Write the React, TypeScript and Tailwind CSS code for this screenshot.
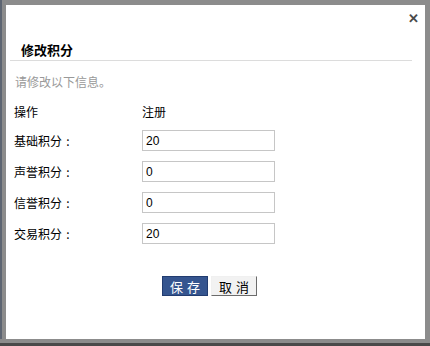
const rows = [
  { label: '基础积分', value: '20' },
  { label: '声誉积分', value: '0' },
  { label: '信誉积分', value: '0' },
  { label: '交易积分', value: '20' },
]

const cjk = "font-['Noto_Sans_CJK_SC',sans-serif]"

export default function App() {
  return (
    <div className="flex h-[346px] w-[430px] flex-col overflow-hidden bg-[#8c8c8c]">
      <div className="flex">
        <div className="h-[339px] w-[2px] shrink-0 bg-[#5d6572]" />
        <div className="h-[339px] w-[4px] shrink-0 bg-[#8c8c8c]" />
        <div className={`relative mt-[5px] flex h-[334px] w-[419px] flex-col bg-white ${cjk}`}>
          <button className="absolute right-[6px] top-[6px] text-[13px] font-bold leading-[13px] text-[#4a4a4a]">
            ✕
          </button>
          <h2 className="ml-[15px] mt-[38px] text-[13px] font-bold leading-[13px] text-black">修改积分</h2>
          <div className="ml-[4px] mt-[4px] h-px w-[402px] bg-[#dcdcdc]" />
          <p className="ml-[9px] mt-[15px] text-[12px] leading-[12px] text-[#999999]">请修改以下信息。</p>
          <div className="ml-[8px] mt-[18px] flex text-[12px] leading-[12px] text-black">
            <span className="w-[128px]">操作</span>
            <span>注册</span>
          </div>
          <div className="mt-[12px] flex flex-col gap-[10px]">
            {rows.map((r) => (
              <div key={r.label} className="ml-[8px] flex h-[21px] items-center text-[12px] leading-[12px] text-black">
                <span className="flex w-[128px]">
                  {r.label}
                  <span className="w-[12px] text-center">:</span>
                </span>
                <input
                  defaultValue={r.value}
                  className="h-[21px] w-[133px] border border-[#c6c6c6] px-[3px] font-['Liberation_Sans',sans-serif] text-[12px] text-black outline-none"
                />
              </div>
            ))}
          </div>
          <div className="ml-[156px] mt-[32px] flex gap-[3px]">
            <button className="h-[20px] w-[46px] border border-[#223c70] bg-[#35558f] pl-[4px] text-[13px] leading-[13px] tracking-[4px] text-white">
              保存
            </button>
            <button className="h-[20px] w-[46px] border border-[#f0f0f0] border-b-[#6b6b6b] border-r-[#6b6b6b] bg-[#f2f2f2] pl-[4px] text-[13px] leading-[13px] tracking-[4px] text-black">
              取消
            </button>
          </div>
        </div>
      </div>
      <div className="mt-[4px] h-[3px] w-full bg-[#4a4a4a]" />
    </div>
  )
}
